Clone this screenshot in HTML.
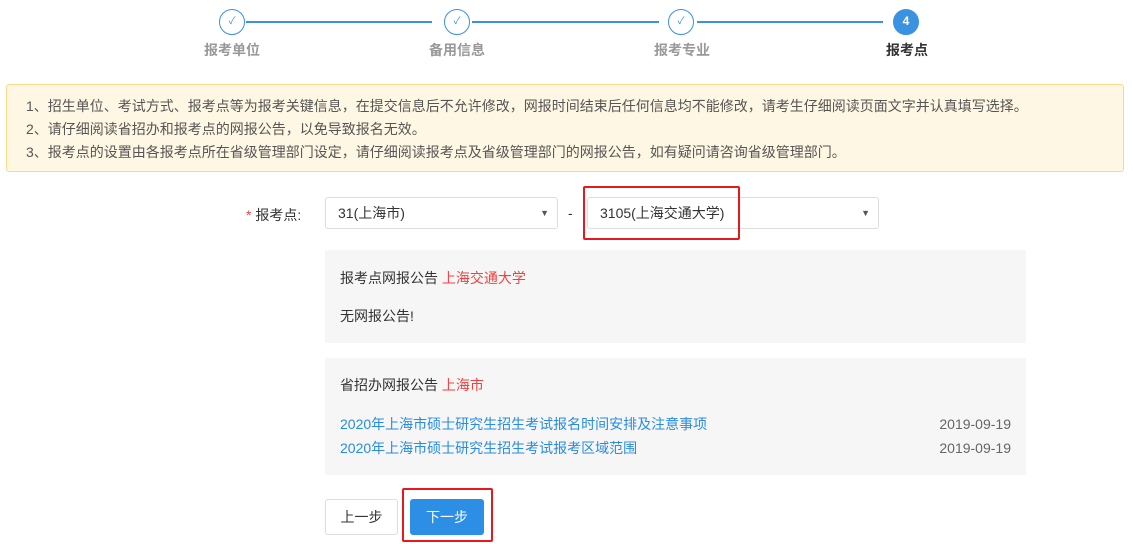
<!DOCTYPE html><html><head><meta charset="utf-8"><style>
*{box-sizing:border-box;margin:0;padding:0}
body{width:1132px;height:544px;background:#fff;font-family:"Liberation Sans","Noto Sans CJK SC",sans-serif;font-size:14px;color:#333;position:relative;overflow:hidden}
.a{position:absolute}
.c{width:26px;height:26px;border-radius:50%;border:1.5px solid #3a92e0;color:#3a92e0;font-size:10px;text-align:center;line-height:23px;background:#fff}
.ln{height:1.5px;background:#3a92e0;top:21px}
.lb{top:40px;font-weight:bold;color:#999;font-size:14px}
.sel{height:32px;border:1px solid #ddd;border-radius:3px;padding-left:12px;line-height:30px;font-size:14px}
.sel:after{content:"▼";position:absolute;right:8px;font-size:9px;color:#555}
.box{background:#f6f6f6;left:325px;width:701px}
.lk{color:#2a8ce0}
.r{color:#f04040}
</style></head><body>
<div class="a ln" style="left:246px;width:186px"></div>
<div class="a ln" style="left:472px;width:187px"></div>
<div class="a ln" style="left:697px;width:186px"></div>
<div class="a c" style="left:219px;top:9px">✓</div>
<div class="a c" style="left:444px;top:9px">✓</div>
<div class="a c" style="left:668px;top:9px">✓</div>
<div class="a c" style="left:893px;top:9px;background:#3a92e0;color:#fff;font-weight:bold;font-size:12px">4</div>
<div class="a lb" style="left:204px">报考单位</div>
<div class="a lb" style="left:429px">备用信息</div>
<div class="a lb" style="left:654px">报考专业</div>
<div class="a lb" style="left:886px;color:#333">报考点</div>
<div class="a" style="left:6px;top:84px;width:1118px;height:88px;background:#fef7e3;border:1px solid #fbd98a;border-radius:3px;padding:10px 0 0 19px;font-size:14px;line-height:23px;color:#555">
1、招生单位、考试方式、报考点等为报考关键信息，在提交信息后不允许修改，网报时间结束后任何信息均不能修改，请考生仔细阅读页面文字并认真填写选择。<br>2、请仔细阅读省招办和报考点的网报公告，以免导致报名无效。<br>3、报考点的设置由各报考点所在省级管理部门设定，请仔细阅读报考点及省级管理部门的网报公告，如有疑问请咨询省级管理部门。</div>
<div class="a" style="left:246px;top:205px"><span class="r">*</span> 报考点:</div>
<div class="a sel" style="left:325px;top:197px;width:233px">31(上海市)</div>
<div class="a" style="left:568px;top:205px">-</div>
<div class="a sel" style="left:587px;top:197px;width:292px">3105(上海交通大学)</div>
<div class="a" style="left:583px;top:186px;width:157px;height:54px;border:2px solid #e8191c;border-radius:2px"></div>
<div class="a box" style="top:250px;height:93px;padding:18px 15px;line-height:20px">报考点网报公告 <span class="r">上海交通大学</span><br><div style="margin-top:18px">无网报公告!</div></div>
<div class="a box" style="top:358px;height:117px;padding:17px 15px;line-height:20px">省招办网报公告 <span class="r">上海市</span>
<div style="margin-top:19px;position:relative"><span class="lk">2020年上海市硕士研究生招生考试报名时间安排及注意事项</span><span style="position:absolute;right:0;color:#666">2019-09-19</span></div>
<div style="margin-top:4px;position:relative"><span class="lk">2020年上海市硕士研究生招生考试报考区域范围</span><span style="position:absolute;right:0;color:#666">2019-09-19</span></div></div>
<div class="a" style="left:325px;top:499px;width:73px;height:36px;border:1px solid #ddd;border-radius:3px;text-align:center;line-height:34px">上一步</div>
<div class="a" style="left:410px;top:499px;width:74px;height:36px;background:#2d8ee6;color:#fff;border-radius:3px;text-align:center;line-height:36px">下一步</div>
<div class="a" style="left:402px;top:488px;width:91px;height:54px;border:2px solid #e8191c;border-radius:2px"></div>
</body></html>
